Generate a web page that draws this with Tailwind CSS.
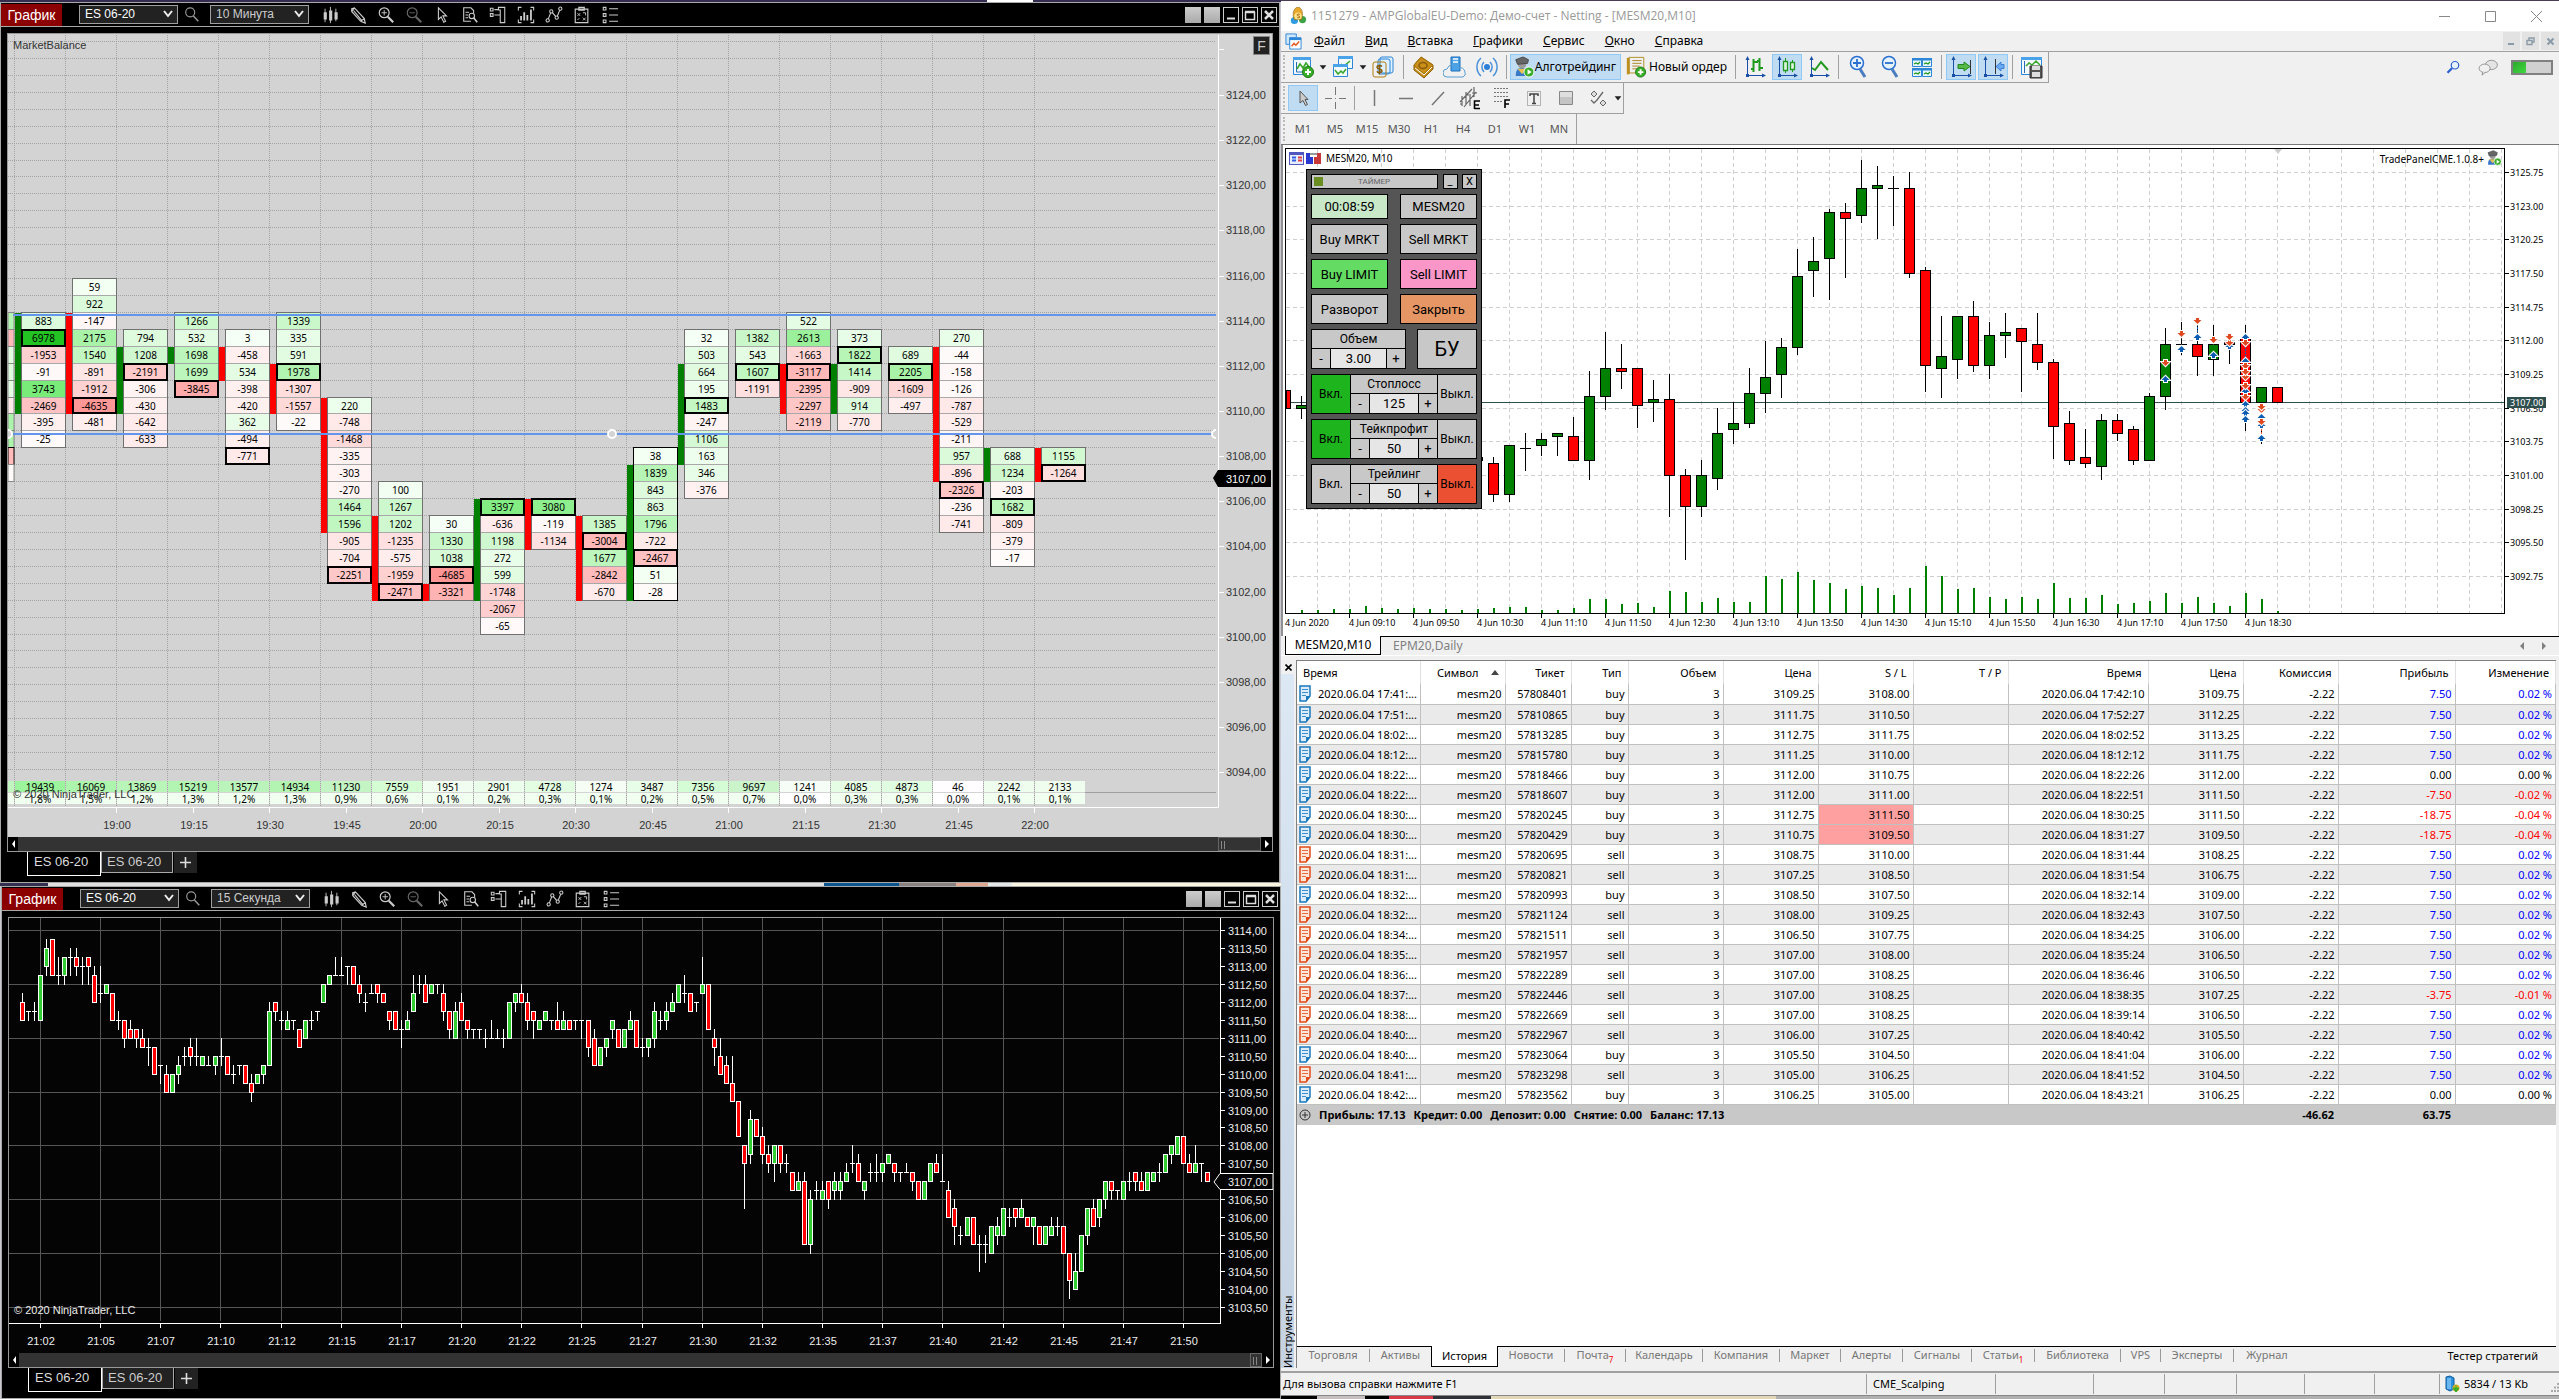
<!DOCTYPE html>
<html lang="ru">
<head>
<meta charset="utf-8">
<title>Trading desktop</title>
<script src="https://cdn.jsdelivr.net/npm/@tailwindcss/browser@4"></script>
</head>
<body class="h-screen overflow-hidden bg-[#3a3350]">
<svg class="hidden" aria-hidden="true">
  <defs>
    <linearGradient id="gold" x1="0" y1="0" x2="1" y2="1"><stop offset="0" stop-color="#fff0a0"/><stop offset="1" stop-color="#d9a520"/></linearGradient>
    <linearGradient id="sky" x1="0" y1="0" x2="0" y2="1"><stop offset="0" stop-color="#eaf6ff"/><stop offset="1" stop-color="#8fc6f0"/></linearGradient>
    <linearGradient id="steel" x1="0" y1="0" x2="1" y2="1"><stop offset="0" stop-color="#e8e8e8"/><stop offset="1" stop-color="#888"/></linearGradient>

    <symbol id="n-candles" viewBox="0 0 20 20"><path d="M4.500 3v15M10.500 1v18M16.500 3v14" stroke="#ccc"/><path d="M3 7h3.500v8H3zM9 5h3.500v11H9zM15 7h3.500v8H15z" fill="#ccc"/></symbol>
    <symbol id="n-pencil" viewBox="0 0 20 20"><path d="M3 3l3-1 11 12 1 5-5-2L3 6zM3 6l3-4M5 5l9 11M13 17l4-3" fill="none" stroke="#ccc" stroke-width="1.300"/></symbol>
    <symbol id="n-zin" viewBox="0 0 20 20"><circle cx="8" cy="7.500" r="5.500" fill="none" stroke="#ccc" stroke-width="1.300"/><path d="M5 7.500h6M8 4.500v6" stroke="#ccc"/><path d="M12 12l6 6" stroke="#ccc" stroke-width="2.500"/></symbol>
    <symbol id="n-zout" viewBox="0 0 20 20"><circle cx="8" cy="7.500" r="5.500" fill="none" stroke="#666" stroke-width="1.300"/><path d="M5 7.500h6" stroke="#666"/><path d="M12 12l6 6" stroke="#666" stroke-width="2.500"/></symbol>
    <symbol id="n-find" viewBox="0 0 20 20"><circle cx="8" cy="7" r="5" fill="none" stroke="#999" stroke-width="1.300"/><path d="M11.500 11l5.500 6" stroke="#999" stroke-width="1.600"/></symbol>
    <symbol id="n-cursor" viewBox="0 0 20 20"><path d="M6 2v13l3-3 3 6 2-1-3-6h4z" fill="none" stroke="#ccc" stroke-width="1.200"/></symbol>
    <symbol id="n-doc" viewBox="0 0 20 20"><path d="M14 8V5l-3-3H3v15h8M5 7h4M5 10h3M5 13h3" fill="none" stroke="#ccc" stroke-width="1.200"/><circle cx="12" cy="11" r="3" fill="none" stroke="#ccc" stroke-width="1.200"/><path d="M14 13l4 5" stroke="#ccc" stroke-width="1.800"/></symbol>
    <symbol id="n-panel" viewBox="0 0 20 20"><path d="M1.500 2.500h3v3h-3zM1.500 8.500h3v3h-3zM6 4h4M6 10h6M10.500 1.500h7v17h-5v-14h-2z" fill="none" stroke="#ccc" stroke-width="1.200"/></symbol>
    <symbol id="n-bars" viewBox="0 0 20 20"><path d="M1.500 5V1.500H5M15 1.500h3.500V5M1.500 15v3.500H5M15 18.500h3.500V15" fill="none" stroke="#ccc" stroke-width="1.200"/><path d="M4.500 16v-5M8 16V7M11.500 16v-6M15.500 16V4" stroke="#ccc" stroke-width="2"/></symbol>
    <symbol id="n-zig" viewBox="0 0 20 20"><path d="M3 16l4-10 6 7 4-10" fill="none" stroke="#ccc" stroke-width="1.200"/><g fill="#000" stroke="#ccc" stroke-width="1.200"><circle cx="3" cy="16" r="1.800"/><circle cx="7" cy="6" r="1.800"/><circle cx="13" cy="13" r="1.800"/><circle cx="17" cy="3" r="1.800"/></g></symbol>
    <symbol id="n-clip" viewBox="0 0 20 20"><path d="M2.500 3.500h14v15h-14zM6.500 1.500h6v3h-6z" fill="none" stroke="#ccc" stroke-width="1.300"/><path d="M5 8l3 3M8 8l-3 3M11 7.500h3v3M5 15.500l2-2M11 13l3 3M14 13l-3 3" stroke="#ccc" fill="none"/></symbol>
    <symbol id="n-list" viewBox="0 0 20 20"><path d="M2.500 1.500h3v3h-3zM2.500 8.500h3v3h-3zM2.500 15.500h3v3h-3zM9 3h10M9 10h10M9 17h10" fill="none" stroke="#ccc" stroke-width="1.200"/></symbol>

    <symbol id="m-logo" viewBox="0 0 20 20"><circle cx="6" cy="15" r="4" fill="#2f9be0"/><circle cx="15" cy="14" r="4" fill="#3aa545"/><path d="M10 0c5 1 6 8 4 14H6C3 8 5 1 10 0z" fill="#e8a82c" stroke="#8a6a20" stroke-width=".7"/><circle cx="10" cy="10" r="4" fill="#ffe38a"/><path d="M12 8.500c-1-1-3-1-3 .3 0 1.400 3 .8 3 2.300 0 1.300-2.300 1.300-3.200.3" fill="none" stroke="#a05a00"/></symbol>
    <symbol id="m-win" viewBox="0 0 18 18"><path d="M1 1h11v4H5v7H1z" fill="#cfe6fb" stroke="#2d86d6"/><path d="M5 5h12v12H5z" fill="#fff" stroke="#2d86d6"/><path d="M5 5h12v2.500H5z" fill="#2d86d6"/><path d="M7 14l2.500-3 2 2 3.500-4" fill="none" stroke="#e2571c" stroke-width="1.500"/></symbol>
    <symbol id="m-newchart" viewBox="0 0 24 24"><path d="M2.500 2.500h17v17h-17z" fill="#f2f9ff" stroke="#2d86d6"/><path d="M2 2h18v3H2z" fill="#4aa3e8"/><path d="M5.500 7v10h12" fill="none" stroke="#2a6cb0"/><path d="M6 14l3-5 3 4 3-5 3 4" fill="none" stroke="#3aa82a" stroke-width="1.600"/><circle cx="17" cy="17" r="5.500" fill="#38ad28" stroke="#1c7a12"/><path d="M14 17h6M17 14v6" stroke="#fff" stroke-width="2"/></symbol>
    <symbol id="m-charts" viewBox="0 0 24 24"><path d="M7.500 1.500h14v12h-14z" fill="#f2f9ff" stroke="#2d86d6"/><path d="M7 1h15v3H7z" fill="#4aa3e8"/><path d="M10 9l3 2 6-5" fill="none" stroke="#3aa82a" stroke-width="1.500"/><path d="M2.500 9.500h14v12h-14z" fill="#f2f9ff" stroke="#2d86d6"/><path d="M2 9h15v3H2z" fill="#4aa3e8"/><path d="M4 15l3 4 3-3 2 2 3-4" fill="none" stroke="#3aa82a" stroke-width="1.500"/></symbol>
    <symbol id="m-money" viewBox="0 0 24 24"><rect x="9" y="2" width="13" height="16" rx="2" fill="#dff0ff" stroke="#2d86d6"/><rect x="7" y="4" width="12" height="15" rx="2" fill="url(#sky)" stroke="#2d86d6"/><rect x="2" y="7" width="13" height="15" rx="2" fill="url(#gold)" stroke="#b07c10"/><path d="M11 11.500c-1-1.500-5-1.500-5 .8 0 2.200 5 1.200 5 3.500 0 2.200-4 2.200-5.200.5M8.500 9.500v10" fill="none" stroke="#8a5a00" stroke-width="1.400"/></symbol>
    <symbol id="m-book" viewBox="0 0 24 24"><path d="M3 10l7-8 12 8v4l-9 9-10-8z" fill="#c98f18" stroke="#8a5c08"/><path d="M3 10l7-8 12 8-9 9z" fill="url(#gold)" stroke="#a8760c"/><path d="M4 13l9 7 8-8" fill="none" stroke="#fff"/><ellipse cx="12" cy="10.500" rx="4" ry="3" fill="none" stroke="#8a5c08" stroke-width="1.500"/></symbol>
    <symbol id="m-cloud" viewBox="0 0 24 24"><path d="M8 2h9v14H8z" fill="#4aa3e8" stroke="#1c6cb8"/><path d="M10 4h5M10 7h5" stroke="#fff" stroke-width="1.500"/><path d="M4 22a4 4 0 010-8 6 6 0 0111-1 5 5 0 017 4 4 4 0 01-2 5z" fill="url(#sky)" stroke="#5a9fd4"/></symbol>
    <symbol id="m-signal" viewBox="0 0 24 24"><g fill="none" stroke="#4a8fd8" stroke-width="1.500"><path d="M6 3a12 12 0 000 18M18 3a12 12 0 010 18"/><path d="M9 7a7 7 0 000 10M15 7a7 7 0 010 10"/></g><circle cx="12" cy="12" r="3" fill="#2d7fd8"/></symbol>
    <symbol id="m-algo" viewBox="0 0 24 24"><path d="M3 22c0-8 3-9 7-9s6 3 7 9z" fill="#3a78c8"/><path d="M5 14l5 6 4-6z" fill="#e8c050"/><circle cx="10" cy="9" r="4.500" fill="#9a9a9a"/><path d="M3 4l8-3 6 3-1 4-11 1z" fill="#666" stroke="#444"/><circle cx="17.500" cy="17.500" r="5.500" fill="#38ad28" stroke="#fff"/><path d="M16 14.500l4.500 3-4.500 3z" fill="#fff"/></symbol>
    <symbol id="m-order" viewBox="0 0 24 24"><path d="M2 2h3v18H2z" fill="#c09020"/><path d="M4.500 1.500h16v17h-16z" fill="url(#gold)" stroke="#b08a20"/><path d="M8 5h10M8 8h10M8 11h8M8 14h6" stroke="#a88018"/><circle cx="17" cy="17.500" r="5.500" fill="#38ad28" stroke="#1c7a12"/><path d="M14 17.500h6M17 14.500v6" stroke="#fff" stroke-width="2"/></symbol>
    <symbol id="m-axis" viewBox="0 0 24 24"><path d="M4.500 3v17M3 20.500h18" stroke="#1a4fa8" fill="none"/><path d="M2.500 5l2-4 2 4zM19 18.500l4 2-4 2zM3 19h3v3H3z" fill="#1a4fa8"/></symbol>
    <symbol id="m-bars" viewBox="0 0 24 24"><use href="#m-axis"/><path d="M10.500 4v13M8 14h2M11 7h4M16.500 3v13M14 6h2M17 13h3" stroke="#1f9a1f" stroke-width="2" fill="none"/></symbol>
    <symbol id="m-candles" viewBox="0 0 24 24"><use href="#m-axis"/><path d="M10.500 3v15M17.500 5v12" stroke="#1f9a1f"/><path d="M8.500 6.500h4v9h-4zM15.500 7.500h4v7h-4z" fill="#dff5df" stroke="#1f9a1f" stroke-width="1.300"/></symbol>
    <symbol id="m-line" viewBox="0 0 24 24"><use href="#m-axis"/><path d="M5 13l3 2 6-8 7 8" fill="none" stroke="#1f9a1f" stroke-width="2"/></symbol>
    <symbol id="m-zin" viewBox="0 0 24 24"><circle cx="11" cy="8" r="6.500" fill="#e6f3ff" stroke="#2a6fd0" stroke-width="1.500"/><path d="M7 8h8M11 4v8" stroke="#2a6fd0" stroke-width="1.800"/><path d="M14 14l5 8" stroke="#4a7cc0" stroke-width="3"/></symbol>
    <symbol id="m-zout" viewBox="0 0 24 24"><circle cx="11" cy="8" r="6.500" fill="#e6f3ff" stroke="#2a6fd0" stroke-width="1.500"/><path d="M7 8h8" stroke="#2a6fd0" stroke-width="1.800"/><path d="M14 14l5 8" stroke="#4a7cc0" stroke-width="3"/></symbol>
    <symbol id="m-tile" viewBox="0 0 24 24"><g fill="#e6f6ff" stroke="#2d86d6"><path d="M2.500 3.500h9v8h-9zM12.500 3.500h9v8h-9zM2.500 13.500h9v8h-9zM12.500 13.500h9v8h-9z"/></g><path d="M2 3h10v2.500H2zM12 3h10v2.500H12zM2 13h10v2.500H2zM12 13h10v2.500H12z" fill="#2d86d6"/><path d="M4 9l2-1 2 1 2-2M14 9l2-1 2 1 2-2M4 19l2-1 2 1 2-2M14 19l2-1 2 1 2-2" fill="none" stroke="#1f9a1f" stroke-width="1.200"/></symbol>
    <symbol id="m-scroll" viewBox="0 0 24 24"><use href="#m-axis"/><path d="M21.500 5v14" stroke="#333"/><path d="M9 9.500h6V7l6 4.500-6 4.500v-2.500H9z" fill="#58b848" stroke="#1f8a1f"/></symbol>
    <symbol id="m-shift" viewBox="0 0 24 24"><use href="#m-axis"/><path d="M14.500 4v15" stroke="#333"/><path d="M23 9.500h-3V7l-5 4.500 5 4.500v-2.500h3z" fill="#6aaaf0" stroke="#2a6fd0" stroke-width=".8"/></symbol>
    <symbol id="m-tpl" viewBox="0 0 24 24"><path d="M1.500 2.500h20v17h-20z" fill="#f2f9ff" stroke="#2d86d6"/><path d="M1 2h21v3H1z" fill="#4aa3e8"/><path d="M4.500 6v12" stroke="#2a6cb0"/><path d="M6 11l3-3 3 2 4-4 4 4" fill="none" stroke="#3aa82a" stroke-width="1.500"/><path d="M10 11h12v12H10z" fill="#555" stroke="#333"/><path d="M12 11h8v4h-8zM12 17h8v5h-8z" fill="#ddd"/></symbol>
    <symbol id="m-cross" viewBox="0 0 24 24"><path d="M12.500 1v8M12.500 16v7M2 12.500h7M16 12.500h7M12 12.500h1" stroke="#777"/></symbol>
    <symbol id="m-cur" viewBox="0 0 24 24"><path d="M9 5v12l3-2.500 2.500 5 2-1-2.500-5h3z" fill="#ccc" stroke="#555"/></symbol>
    <symbol id="m-v" viewBox="0 0 24 24"><path d="M12.500 4v16" stroke="#777" stroke-width="1.500"/></symbol>
    <symbol id="m-h" viewBox="0 0 24 24"><path d="M5 12.500h14" stroke="#777" stroke-width="1.500"/></symbol>
    <symbol id="m-d" viewBox="0 0 24 24"><path d="M6 19L18 6" stroke="#777" stroke-width="1.500"/></symbol>
    <symbol id="m-chan" viewBox="0 0 24 24"><path d="M2 16L14 3M6 21L18 6M4 10v10M8 6v12M12 8v12M16 1v10M2 18h2M8 9h3M14 7h5" stroke="#666" fill="none" stroke-width="1.200"/><path d="M16.500 23v-8H22M16.500 19H21M16.500 22.500H22" stroke="#000" stroke-width="1.600" fill="none"/></symbol>
    <symbol id="m-fib" viewBox="0 0 24 24"><path d="M4 2.500h14M4 6.500h14M4 10.500h14M4 15.500h8" stroke="#777" stroke-dasharray="2 1"/><path d="M15 22v-8h5M15 18h4" stroke="#000" stroke-width="1.600" fill="none"/></symbol>
    <symbol id="m-text" viewBox="0 0 24 24"><path d="M5.500 5.500h13v14h-13z" fill="none" stroke="#777" stroke-dasharray="1 1"/><path d="M8 10V8h8v2M12 8v9M10 17.500h4" stroke="#444" stroke-width="1.500" fill="none"/></symbol>
    <symbol id="m-rect" viewBox="0 0 24 24"><path d="M5.500 5.500h13v13h-13z" fill="#c4c4c4" stroke="#888"/><path d="M6 6h12v5H6z" fill="#dedede"/></symbol>
    <symbol id="m-obj" viewBox="0 0 24 24"><path d="M8 5l3 3-3 3-3-3zM17 14l3 3-3 3-3-3z" fill="#ddd" stroke="#666"/><path d="M17 6l-6 8-3 3-3-3" fill="none" stroke="#666" stroke-width="1.300"/></symbol>
    <symbol id="m-tiny" viewBox="0 0 8 24"><path d="M0 10h8l-4 5z" fill="#222"/></symbol>
    <symbol id="m-search" viewBox="0 0 20 20"><circle cx="12" cy="7" r="5" fill="#e6f3ff" stroke="#2a5fd0" stroke-width="1.600"/><path d="M8 11l-6 6" stroke="#2a5fd0" stroke-width="3"/></symbol>
    <symbol id="m-chat" viewBox="0 0 24 20"><ellipse cx="16" cy="7" rx="7" ry="5.500" fill="#e4e4e4" stroke="#888"/><ellipse cx="8" cy="11" rx="6.500" ry="5" fill="#f0f0f0" stroke="#888"/><path d="M6 15l-1 4 4-3.500" fill="#eee" stroke="#888"/></symbol>
    <symbol id="m-docb" viewBox="0 0 12 17"><path d="M1 1h10v10l-4 5H1z" fill="#dcecfb" stroke="#1878bc" stroke-width="1.500"/><path d="M3 4.500h6M3 7.500h6M3 10.500h4" stroke="#3a8fd0"/><path d="M11 11l-4 5v-5z" fill="#1878bc"/></symbol>
    <symbol id="m-docs" viewBox="0 0 12 17"><path d="M1 1h10v10l-4 5H1z" fill="#fde6da" stroke="#e04a18" stroke-width="1.500"/><path d="M3 4.500h6M3 7.500h6M3 10.500h4" stroke="#e86a40"/><path d="M11 11l-4 5v-5z" fill="#e04a18"/></symbol>
    <symbol id="m-net" viewBox="0 0 18 18"><path d="M2 2l4-1 4 2v11l-4 2-4-2z" fill="#2a90e0" stroke="#0f5a9c"/><path d="M4 3v11M6 3v11" stroke="#a8dcff"/><circle cx="12" cy="13" r="3.500" fill="#e0b020"/><path d="M12 10v6M9 13l3 4 3-4z" fill="#38ad28" stroke="#38ad28"/></symbol>
  </defs>
</svg>

<div class="grid h-full grid-cols-[1281fr_1278fr]">

  <!-- NinjaTrader column -->
  <div class="grid min-h-0 min-w-0 grid-rows-[2px_881fr_3px_513fr] bg-[#c8c8d0]">
    <div class="flex bg-[#352c52]"><span class="ml-[987px] w-[46px] bg-white"></span></div>
    <section id="win1" class="mr-px flex min-h-0 flex-col border border-[#a8a8a8] bg-black font-['Liberation_Sans',sans-serif]"></section>
    <div class="flex">
      <span class="w-12 bg-[#332f50]"></span><span class="w-[776px] bg-[#e0e0e0]"></span><span class="w-[75px] bg-[#0a5590]"></span><span class="w-[57px] bg-[#8a8280]"></span><span class="w-8 bg-[#e0a890]"></span><span class="w-6 bg-[#e4e8e8]"></span><span class="flex-1 bg-[#f8f4e0]"></span>
    </div>
    <section id="win2" class="ml-px flex min-h-0 flex-col border border-[#a8a8a8] bg-black font-['Liberation_Sans',sans-serif]"></section>
  </div>

  <!-- MetaTrader column -->
  <div class="flex min-h-0 min-w-0 flex-col border-t border-[#4a4055] bg-[#f0f0f0] font-['Noto_Sans',sans-serif] text-[11px] text-black">
    <header class="flex h-[30px] shrink-0 items-center bg-white pl-2 text-xs text-[#999]">
      <svg class="size-[18px]"><use href="#m-logo"/></svg>
      <h1 class="ml-1 font-['Open_Sans',sans-serif] text-xs">1151279 - AMPGlobalEU-Demo: Демо-счет - Netting - [MESM20,M10]</h1>
      <div class="ml-auto flex">
        <button aria-label="Свернуть" class="flex h-7 w-[45px] items-center justify-center"><svg width="11" height="11"><path d="M0 5.500h11" stroke="#888"/></svg></button>
        <button aria-label="Развернуть" class="flex h-7 w-[46px] items-center justify-center"><svg width="11" height="11"><path d="M.5.500h10v10H.500z" fill="none" stroke="#888"/></svg></button>
        <button aria-label="Закрыть" class="flex h-7 w-[46px] items-center justify-center"><svg width="11" height="11"><path d="M0 0l11 11M11 0L0 11" stroke="#888"/></svg></button>
      </div>
    </header>
    <nav class="flex h-[21px] shrink-0 items-center gap-5 border-b border-[#a0a0a0] pl-1 text-xs">
      <svg class="-mr-2 size-[17px]"><use href="#m-win"/></svg>
      <a href="#"><u>Ф</u>айл</a><a href="#"><u>В</u>ид</a><a href="#"><u>В</u>ставка</a><a href="#"><u>Г</u>рафики</a><a href="#"><u>С</u>ервис</a><a href="#"><u>О</u>кно</a><a href="#"><u>С</u>правка</a>
      <div class="ml-auto flex gap-0.5">
        <button aria-label="Свернуть график" class="flex h-[18px] w-[17px] items-center justify-center bg-[#e2e2e2]"><svg width="9" height="9"><path d="M1 7h6" stroke="#8a9aa8" stroke-width="2"/></svg></button>
        <button aria-label="Восстановить график" class="flex h-[18px] w-[17px] items-center justify-center bg-[#e2e2e2]"><svg width="9" height="9"><path d="M3 3V1h5v4H6M1 3.500h5v4H1z" fill="none" stroke="#8a9aa8" stroke-width="1.400"/></svg></button>
        <button aria-label="Закрыть график" class="flex h-[18px] w-[18px] items-center justify-center bg-[#e2e2e2]"><svg width="9" height="9"><path d="M1.500 1.500l6 6M7.500 1.500l-6 6" stroke="#8a9aa8" stroke-width="2"/></svg></button>
      </div>
    </nav>

    <div class="flex h-[31px] shrink-0">
      <div class="flex items-center border-r border-b border-[#a0a0a0]" id="tb1"></div>
      <div class="ml-auto flex items-center gap-4 pr-1.5">
        <button aria-label="Поиск"><svg class="size-[15px]"><use href="#m-search"/></svg></button>
        <button aria-label="Чат"><svg class="h-[17px] w-[22px]"><use href="#m-chat"/></svg></button>
        <span class="-ml-1 flex h-[15px] w-[42px] border-2 border-[#808080] bg-[#d0d0d0]"><span class="w-[13px] bg-linear-to-br from-[#2ca82c] to-[#40d840]"></span></span>
      </div>
    </div>
    <div class="flex h-[31px] shrink-0"><div class="flex items-center border-r border-b border-[#a0a0a0]" id="tb2"></div></div>
    <div class="flex h-[31px] shrink-0 border-b border-[#787878]"><div class="flex items-center border-r border-[#a0a0a0] text-[#555]" id="tb3"></div></div>

    <!-- price chart with the trading panel over it -->
    <main class="relative h-[491px] shrink-0 border-r border-l-2 border-[#909090] border-r-[#e0e0e0] bg-white">
      <svg id="mt" class="block h-full w-full"></svg>
      <aside class="absolute top-6 left-[23px] flex w-[176px] flex-col gap-[5px] border border-black bg-[#555] p-1 font-['Roboto',sans-serif] text-[13px] leading-none">
        <div class="flex h-[15px] items-stretch justify-between">
          <div class="flex w-[127px] items-center border border-black bg-[#c8c8c8] pl-0.5 text-[8px] text-[#666]"><span class="size-[9px] bg-[#6b8e23]"></span><span class="flex-1 pr-3 text-center">ТАЙМЕР</span></div>
          <button class="w-[15px] border border-black bg-[#c8c8c8] text-[11px]">_</button>
          <button class="w-[15px] border border-black bg-[#c8c8c8] text-[11px]">X</button>
        </div>
        <div class="grid grid-cols-2 gap-x-3 gap-y-[5px]">
          <div class="flex h-[25px] items-center justify-center border border-black bg-[#c8e8c8]">00:08:59</div>
          <button class="h-[25px] border border-black bg-[#c8c8c8]">MESM20</button>
          <button class="h-[30px] border border-black bg-[#c8c8c8]">Buy MRKT</button>
          <button class="h-[30px] border border-black bg-[#c8c8c8]">Sell MRKT</button>
          <button class="h-[30px] border border-black bg-[#64dc64]">Buy LIMIT</button>
          <button class="h-[30px] border border-black bg-[#fa96c8]">Sell LIMIT</button>
          <button class="h-[30px] border border-black bg-[#c8c8c8]">Разворот</button>
          <button class="h-[30px] border border-black bg-[#e69664]">Закрыть</button>
        </div>
        <div class="flex h-10 justify-between">
          <div class="flex w-[95px] flex-col border border-black bg-[#c8c8c8]">
            <label for="vol" class="flex h-[18px] items-center justify-center text-xs">Объем</label>
            <div class="flex min-h-0 flex-1 border-t border-black"><button class="w-[18px] shrink-0">-</button><input id="vol" value="3.00" class="min-w-0 flex-1 border-x border-black bg-[#e6e6e6] text-center"><button class="w-[18px] shrink-0">+</button></div>
          </div>
          <button class="w-[60px] border border-black bg-[#c8c8c8] text-xl">БУ</button>
        </div>
        <div id="stops" class="flex flex-col gap-[5px] text-xs"></div>
      </aside>
    </main>

    <div class="flex h-5 shrink-0 items-start border-b border-white bg-[#f0f0f0] text-xs">
      <a href="#" class="ml-1 flex h-[19px] w-24 items-center justify-center border border-t-0 border-black bg-white">MESM20,M10</a>
      <a href="#" class="flex h-[19px] flex-1 items-center border-t border-black pl-3 text-[#808080]">EPM20,Daily</a>
      <div class="flex h-[19px] items-center gap-4 border-t border-black pr-3">
        <button aria-label="Влево"><svg width="6" height="8"><path d="M5 0v8L1 4z" fill="#808080"/></svg></button>
        <button aria-label="Вправо"><svg width="6" height="8"><path d="M1 0v8l4-4z" fill="#808080"/></svg></button>
      </div>
    </div>

    <!-- toolbox -->
    <section class="flex min-h-0 flex-1 pt-1 pr-[3px] pb-[3px]">
      <div class="flex w-[15px] flex-col">
        <button aria-label="Закрыть панель" class="flex h-[14px] items-center justify-center"><svg width="7" height="7"><path d="M.5.500l6 6M6.500.500l-6 6" stroke="#000" stroke-width="1.600"/></svg></button>
        <div class="mr-0.5 flex flex-1 rotate-180 items-center bg-linear-to-b from-[#c4d2e2] to-[#dce8f4] [writing-mode:vertical-rl]"><span class="leading-none">Инструменты</span></div>
      </div>
      <div class="flex min-w-0 flex-1 flex-col border-t border-l border-[#808080] bg-white">
        <table class="w-full table-fixed border-collapse text-right leading-none">
          <colgroup><col class="w-[123px]"><col class="w-[85px]"><col class="w-[66px]"><col class="w-[57px]"><col class="w-[95px]"><col class="w-[95px]"><col class="w-[95px]"><col class="w-[95px]"><col class="w-[140px]"><col class="w-[95px]"><col class="w-[95px]"><col class="w-[117px]"><col></colgroup>
          <thead><tr id="heads" class="h-[23px]"></tr></thead>
          <tbody id="rows"></tbody>
          <tfoot class="bg-[#c8c8c8] font-bold">
            <tr class="h-[21px]"><td colspan="10"><div class="flex items-center gap-2 pl-0.5"><svg width="12" height="12"><circle cx="6" cy="6" r="5" fill="none" stroke="#333"/><path d="M3 6h6M6 3v6" stroke="#333"/></svg><span>Прибыль: 17.13</span><span>Кредит: 0.00</span><span>Депозит: 0.00</span><span>Снятие: 0.00</span><span>Баланс: 17.13</span></div></td><td class="pr-1">-46.62</td><td class="pr-1">63.75</td><td></td></tr>
          </tfoot>
        </table>
        <div class="flex-1 border-b border-black"></div>
        <div id="tabs" class="flex h-[21px] items-start bg-[#f0f0f0] text-[#777]"></div>
      </div>
    </section>

    <footer class="flex h-6 shrink-0 items-center border-t-2 border-[#a0a0a0]">
      <span class="w-[585px] pl-0.5">Для вызова справки нажмите F1</span>
      <span class="flex h-5 w-[129px] items-center border-l border-[#a0a0a0] pl-1.5">CME_Scalping</span>
      <span class="h-5 w-[98px] border-l border-[#a0a0a0]"></span><span class="h-5 w-[71px] border-l border-[#a0a0a0]"></span><span class="h-5 w-[72px] border-l border-[#a0a0a0]"></span><span class="h-5 w-[68px] border-l border-[#a0a0a0]"></span><span class="h-5 w-[70px] border-l border-[#a0a0a0]"></span><span class="h-5 w-[65px] border-l border-[#a0a0a0]"></span>
      <span class="flex h-5 flex-1 items-center gap-0.5 border-l border-[#a0a0a0] pl-1"><svg class="size-[18px]"><use href="#m-net"/></svg>5834 / 13 Kb</span>
      <svg width="10" height="10" class="mt-2"><path d="M8 1h2M5 4.500h2M8 4.500h2M2 8h2M5 8h2M8 8h2" stroke="#aaa" stroke-width="2"/></svg>
    </footer>
    <div class="flex h-1 shrink-0 border-t border-[#888]"><span class="w-9 bg-black"></span><span class="w-12 bg-[#c8c0c0]"></span><span class="w-6 bg-black"></span><span class="w-[44px] bg-[#d83848]"></span><span class="w-[58px] bg-[#303038]"></span><span class="w-[285px] bg-[#e0d8b8]"></span><span class="flex-1 bg-[#b0b0b0]"></span></div>
  </div>
</div>

<script>
const $ = id => document.getElementById(id);

/* ---------- NinjaTrader windows ---------- */
const nIcons = [['n-candles','Стиль графика'],['n-pencil','Рисование'],['n-zin','Увеличить'],['n-zout','Уменьшить'],['n-cursor','Курсор'],['n-doc','Ряды данных'],['n-panel','Панель'],['n-bars','Данные'],['n-zig','Индикаторы'],['n-clip','Стратегии'],['n-list','Свойства']];
function ninjaWindow(id, period, chartId, thumb, extra) {
  const sel = (v, cls, label) => `<div class="relative h-[19px] w-[99px]"><select aria-label="${label}" class="block h-full w-full appearance-none border border-[#a0a0a0] bg-[#222] pb-0.5 pl-[5px] text-xs ${cls}"><option>${v}</option></select><svg class="pointer-events-none absolute top-[5px] right-[5px]" width="10" height="8"><path d="M1 1l4 5 4-5" fill="none" stroke="#eee" stroke-width="2"/></svg></div>`;
  $(id).innerHTML = `
  <header class="flex h-6 shrink-0 items-center border-b border-[#a8a8a8]">
    <h2 class="flex h-[22px] w-[61px] items-center justify-center bg-[#8b0000] text-sm text-white">График</h2>
    <div class="w-[17px]"></div>
    ${sel('ES 06-20', 'text-white', 'Инструмент')}
    <button aria-label="Найти" class="ml-1 flex w-5 justify-center"><svg class="size-[18px]"><use href="#n-find"/></svg></button>
    <div class="w-2"></div>
    ${sel(period, 'text-[#ccc]', 'Период')}
    <div class="ml-[7px] flex">${nIcons.map(i => `<button aria-label="${i[1]}" class="flex w-7 justify-center"><svg class="size-[18px]"><use href="#${i[0]}"/></svg></button>`).join('')}</div>
    <div class="mr-0.5 ml-auto flex gap-[3px]">
      <span class="size-4 bg-linear-to-b from-[#ccc] to-[#aaa]"></span><span class="size-4 bg-linear-to-b from-[#ccc] to-[#aaa]"></span>
      <button aria-label="Свернуть" class="size-4 border border-[#ccc]"><svg width="14" height="14"><path d="M3 10.500h8" stroke="#ddd" stroke-width="2"/></svg></button>
      <button aria-label="Развернуть" class="size-4 border border-[#ccc]"><svg width="14" height="14"><path d="M2.500 4.500h9v7h-9zM2 3.500h10" fill="none" stroke="#ddd" stroke-width="1.500"/></svg></button>
      <button aria-label="Закрыть" class="size-4 border border-[#ccc]"><svg width="14" height="14"><path d="M3 3l8 8M11 3l-8 8" stroke="#ddd" stroke-width="2.500"/></svg></button>
    </div>
  </header>
  <div class="relative mx-1.5 mt-1.5 flex min-h-0 flex-1 flex-col border border-[#989898]">
    <svg id="${chartId}" class="block min-h-0 w-full flex-1"></svg>${extra}
    <div class="flex h-[14px] shrink-0 bg-[#333]">
      <button aria-label="Назад" class="w-[10px] bg-black"><svg width="10" height="14"><path d="M7 3v8L4 7z" fill="#fff"/></svg></button>
      <span class="ml-auto ${thumb} border border-[#666] pt-[3px] pl-0.5"><svg width="5" height="8"><path d="M.5 0v8M3.500 0v8" stroke="#888"/></svg></span>
      <button aria-label="Вперёд" class="w-[11px] bg-black"><svg width="11" height="14"><path d="M4 3v8l4-4z" fill="#fff"/></svg></button>
    </div>
  </div>
  <div class="flex h-[30px] shrink-0 items-start pl-[26px] text-[13px] leading-[19px] text-[#ccc]">
    <a href="#" class="h-6 w-[74px] border border-t-0 border-white bg-black pl-1.5 text-[#ddd]">ES 06-20</a>
    <a href="#" class="h-[21px] w-[72px] border border-t-0 border-[#aaa] bg-[#222] pl-[5px]">ES 06-20</a>
    <button aria-label="Добавить вкладку" class="ml-px flex h-[21px] w-[23px] items-center justify-center bg-[#222]"><svg width="11" height="11"><path d="M0 5.500h11M5.500 0v11" stroke="#ddd" stroke-width="1.600"/></svg></button>
  </div>`;
}
ninjaWindow('win1', '10 Минута', 'fp', 'w-[43px]', '<button class="absolute top-0.5 right-0.5 h-[19px] w-[17px] border border-[#888] bg-[#222] text-sm leading-none text-[#ccc]">F</button>');
ninjaWindow('win2', '15 Секунда', 'sec', 'w-[12px]', '');

const line = (x1, y1, x2, y2, a = '') => `<path d="M${x1} ${y1}L${x2} ${y2}" ${a}/>`;
const rect = (x, y, w, h, a) => `<rect x="${x}" y="${y}" width="${w}" height="${h}" ${a}/>`;
const text = (x, y, s, a = '') => `<text x="${x}" y="${y}" ${a}>${s}</text>`;
const lerp = (pts, v) => { for (let i = 1; i < pts.length; i++) if (v <= pts[i][0]) { const [a, b] = pts[i - 1], [c, d] = pts[i]; return Math.round(b + (d - b) * (v - a) / (c - a)); } return pts[pts.length - 1][1]; };

/* Footprint chart: first row, bar colour, bar rows, deltas; * marks the point of control */
const cols = [
 [16,'g',16,22,'883 6978* -1953 -91 3743 -2469 -395 -25'],
 [14,'r',16,22,'59 922 -147 2175 1540 -891 -1912 -4635* -481'],
 [17,'g',18,22,'794 1208 -2191* -306 -430 -642 -633'],
 [16,'g',18,19,'1266 532 1698 1699 -3845*'],
 [17,'r',18,20,'3 -458 534 -398 -420 362 -494 -771*'],
 [16,'r',19,22,'1339 335 591 1978* -1307 -1557 -22'],
 [21,'r',21,29,'220 -748 -1468 -335 -303 -270 1464 1596 -905 -704 -2251*'],
 [26,'r',28,33,'100 1267 1202 -1235 -575 -1959 -2471*'],
 [28,'r',32,33,'30 1330 1038 -4685* -3321'],
 [27,'g',27,33,'3397* -636 1198 272 599 -1748 -2067 -65'],
 [27,'r',27,30,'3080* -119 -1134'],
 [28,'r',28,33,'1385 -3004* 1677 -2842 -670'],
 [24,'g',25,33,'38 1839 843 863 1796 -722 -2467* 51 -28'],
 [17,'g',19,25,'32 503 664 195 1483* -247 1106 163 346 -376'],
 [17,'',0,0,'1382 543 1607* -1191'],
 [16,'r',19,22,'522 2613 -1663 -3117* -2395 -2297 -2119'],
 [17,'g',19,22,'373 1822* 1414 -909 914 -770'],
 [18,'',0,0,'689 2205* -1609 -497'],
 [17,'r',18,26,'270 -44 -158 -126 -787 -529 -211 957 -896 -2326* -236 -741'],
 [24,'g',24,26,'688 1234 -203 1682* -809 -379 -17'],
 [24,'r',24,26,'1155 -1264*']];
const vols = [19439,16069,13869,15219,13577,14934,11230,7559,1951,2901,4728,1274,3487,7356,9697,1241,4085,4873,46,2242,2133];
const pcts = '1,8 1,5 1,2 1,3 1,2 1,3 0,9 0,6 0,1 0,2 0,3 0,1 0,2 0,5 0,7 0,0 0,3 0,3 0,0 0,1 0,1'.split(' ');
const tone = v => {
  if (v >= 0) { const c = lerp([[0,246],[300,232],[900,220],[1500,196],[2200,168],[3700,122],[7000,34]], v); return `rgb(${c},${lerp([[0,255],[2200,243],[3700,236],[7000,195]], v)},${c})`; }
  const c = lerp([[0,251],[400,240],[900,230],[1950,208],[2470,193],[3845,171],[4685,150]], -v); return `rgb(255,${c},${c})`;
};
(function footprint() {
  const row = i => Math.round(41 + 16.93 * i), col = k => 14 + 51 * k;
  let s = '<rect width="3000" height="2000" fill="#d3d3d3"/><g transform="translate(-8 -34)">';
  s += '<g stroke="#a4a4a4" stroke-dasharray="1 1" shape-rendering="crispEdges">';
  for (let i = 0; i < 44; i++) s += line(8, row(i) + .5, 1216, row(i) + .5);
  for (let k = 0; k < 21; k++) s += line(col(k) + .5, 35, col(k) + .5, 806);
  s += '</g>' + line(1085, 792.5, 1216, 792.5, 'stroke="#a0a0a0"');
  [1900,-3000,700,800,500,-700,2100,2100,-2900,-20].forEach((v, i) => s += rect(8, row(16 + i) + .5, 6, 17, `fill="${tone(v)}" stroke="${v === -2900 ? '#000' : '#888'}"`));
  let marks = '';
  cols.forEach(([start, c, a, b, list], k) => {
    const x = col(k) + 7.5, cells = list.split(' ');
    if (c) s += rect(col(k) + 1, row(a) + 1, 6, row(b) - row(a), `fill="${c === 'g' ? '#008000' : '#f00'}" shape-rendering="crispEdges"`);
    cells.forEach((t, j) => {
      const v = parseInt(t), y = row(start + j) + .5, h = row(start + j + 1) - row(start + j);
      s += rect(x, y, 44, h, `fill="${tone(v)}" stroke="#a8a8a8" shape-rendering="crispEdges"`);
      s += text(x + 22, y + 12, v, 'text-anchor="middle"');
      if (t.endsWith('*')) marks += rect(x + .5, y + .5, 43, h - 1, 'fill="none" stroke="#000" stroke-width="2" shape-rendering="crispEdges"');
    });
    s += rect(x, row(start) + .5, 44, row(start + cells.length) - row(start), `fill="none" stroke="${k === 12 ? '#000' : '#707070'}" shape-rendering="crispEdges"`);
  });
  s += marks;
  s += rect(8, 781, 6, 11, 'fill="#c0f5c0"') + rect(8, 793, 6, 11, 'fill="#f0fff0"');
  vols.forEach((v, k) => {
    const c = lerp([[0,255],[2000,240],[7500,212],[14000,184],[19439,156]], v), x = col(k) + 1;
    s += rect(x, 781, 50, 11, `fill="rgb(${c},${v > 9000 ? 244 : 253},${c})"`) + rect(x, 793, 50, 11, `fill="${v < 1250 ? '#fff' : '#f0fff0'}"`);
    s += text(x + 25, 791, v, 'text-anchor="middle"') + text(x + 25, 803, pcts[k] + '%', 'text-anchor="middle"');
  });
  s += '<g stroke="#6495ed" stroke-width="2" shape-rendering="crispEdges">' + line(13, 315, 1216, 315) + line(13, 434, 1216, 434) + '</g>';
  s += '<g fill="#d3d3d3" stroke="#fff" stroke-width="2"><circle cx="612" cy="434" r="4"/><path d="M8 430a4 4 0 010 8M1216 430a4 4 0 000 8"/></g>';
  s += '<g fill="none" stroke="#fff" shape-rendering="crispEdges"><path d="M1218.500 35V807.500H8"/>' + line(1219, 49.5, 1224, 49.5);
  for (let i = 0; i < 16; i++) { const y = Math.round(95 + i * 45.14) + .5; s += line(1219, y, 1224, y); }
  for (let i = 0; i < 13; i++) { const x = Math.round(116 + i * 76.5) + .5; s += line(x, 808, x, 813); }
  s += '</g><g class="font-[\'Liberation_Sans\',sans-serif] text-[11px]" fill="#333">';
  for (let i = 0; i < 16; i++) s += text(1226, Math.round(99 + i * 45.14), (3124 - 2 * i) + ',00');
  for (let i = 0; i < 13; i++) { const m = 1140 + i * 15; s += text(Math.round(117 + i * 76.5), 829, Math.floor(m / 60) + ':' + String(m % 60).padStart(2, '0'), 'text-anchor="middle"'); }
  s += text(13, 49, 'MarketBalance') + text(13, 798, '© 2020 NinjaTrader, LLC');
  s += '<path d="M1213 478l5-8h53v17h-53z" fill="#000"/>' + text(1226, 483, '3107,00', 'fill="#fff"') + '</g></g>';
  $('fp').innerHTML = s;
  $('fp').classList.add("font-['Noto_Sans',sans-serif]", 'text-[10px]');
})();

/* 15-second chart. Each candle: high,top,bottom,low in quarter-point ticks below 3114, plus colour */
const sec = `7,8,10,10r 9,9,9,10 8,9,9,10 5,5,10,10g 1,2,4,5g 1,1,5,5r 3,5,5,6 3,3,5,6g 2,3,3,5 2,3,4,5r 3,4,4,6 3,3,4,6r 4,5,8,8r 4,7,7,8 6,6,7,7g 7,7,10,10r 9,10,10,11 10,10,12,13r 10,11,12,12r 11,11,12,13r 11,12,13,13r 12,13,13,15 13,13,16,16r 15,15,15,17 15,16,18,18r 16,16,18,18g 14,15,16,17g 13,14,14,15 12,13,14,15r 12,14,14,15 14,14,15,15g 14,15,15,15 14,14,15,16g 12,14,14,15 14,14,16,16r 15,16,16,17 15,15,15,16 15,15,17,17r 16,17,18,19r 16,16,17,17g 15,15,16,17g 8,9,15,15g 8,8,9,10r 9,10,10,11 9,10,11,11g 10,10,10,11 11,11,13,13r 10,10,12,12g 9,10,10,11 9,9,9,10 6,6,8,8g 5,5,6,6g 3,5,5,5 3,5,5,5 4,4,4,6 4,4,6,6r 5,6,7,8r 7,8,8,9 6,7,7,7 6,6,7,8r 7,7,8,8r 9,9,10,11r 9,9,11,11r 10,11,11,13 9,10,11,11g 5,7,9,9g 5,6,6,7 5,6,8,8r 6,6,7,7g 6,6,6,7 6,7,9,10r 9,9,11,12r 8,9,12,12g 7,8,10,10r 10,10,11,12r 11,11,11,12 11,11,11,12 11,12,12,13 10,12,12,12 11,12,12,12 11,12,12,13 8,8,12,12g 7,7,8,9g 6,7,8,8r 7,8,10,11r 9,9,10,12r 10,10,11,11g 9,9,10,10g 10,10,10,11 8,10,11,11r 9,10,11,11g 10,10,11,11r 10,10,10,11 10,10,10,12 10,10,13,14r 11,12,15,15r 13,13,15,15g 12,12,13,14g 10,10,11,12g 11,11,13,13r 11,11,13,13g 9,10,11,11g 10,10,13,13r 12,13,13,14 12,12,13,14g 8,9,12,13g 9,10,10,11 8,9,10,11g 7,8,9,9g 6,6,8,8g 5,7,7,8 7,7,9,9r 8,8,8,9 3,6,7,7g 6,6,11,11r 11,12,13,15r 12,14,16,16r 14,15,17,17r 14,17,19,19r 19,19,23,23r 24,24,26,31r 20,21,25,26g 21,21,23,23r 22,23,25,26r 24,25,26,27r 24,24,26,28g 24,24,26,27r 25,26,26,27 27,27,29,29r 27,28,29,29g 27,28,35,35r 29,30,35,36g 28,29,29,30 28,29,30,30g 28,28,30,31r 27,28,29,30g 27,28,29,30g 26,27,28,28g 24,26,26,27 25,26,28,28r 28,28,29,30g 26,27,27,28 25,27,27,28 26,26,27,28g 25,25,26,26g 26,26,27,28r 27,27,27,28 26,27,27,27 27,27,28,29r 28,28,30,30r 28,28,30,30g 26,26,28,28g 25,26,27,27r 25,28,28,28 28,29,32,32r 30,31,33,35r 33,34,34,35 32,32,34,34g 32,32,35,35r 34,35,35,38 34,35,35,37 33,33,36,36g 32,33,34,35g 31,31,34,34g 31,32,32,33 31,31,32,33r 30,31,32,32g 32,32,33,33r 32,32,33,35g 33,33,35,35r 33,33,35,35g 32,33,34,34g 32,33,33,34 33,33,36,36r 36,36,39,41r 36,38,40,40g 34,34,38,38g 31,31,34,35g 30,31,33,33r 30,30,32,33g 28,28,30,31g 28,28,29,30r 29,29,29,30 28,28,30,30g 27,28,28,29 27,27,28,29r 27,28,29,29r 27,27,29,29g 27,27,28,28g 26,27,27,28 25,25,27,27g 24,24,25,26g 23,23,25,25g 23,23,26,26r 25,26,27,27r 24,26,27,27g 26,26,26,28 27,27,28,28r`.split(' ');
(function seconds() {
  const y = t => Math.round(930 + t * 8.977);
  let s = '<rect width="3000" height="2000" fill="#040404"/><g transform="translate(-9 -918)" shape-rendering="crispEdges"><g stroke="#555">';
  for (let t = 0; t <= 42; t += 6) s += line(9, y(t) + .5, 1219, y(t) + .5);
  const vx = i => Math.round(40 + i * 60.16);
  for (let i = 0; i < 20; i++) s += line(vx(i) + .5, 918, vx(i) + .5, 1321);
  s += '</g><g stroke="#fff">';
  sec.forEach((c, n) => {
    const [h, t, b, l] = c.split(',').map(v => parseInt(v)), x = Math.round(22 + n * 6.016) + .5, k = c.slice(-1);
    s += line(x, y(h), x, y(l) + 1);
    s += t === b ? line(x - 2.5, y(t) + .5, x + 2.5, y(t) + .5) : rect(x - 2, y(t) + .5, 4, y(b) - y(t), `fill="${k === 'g' ? '#32cd32' : '#f00'}"`);
  });
  s += '<path d="M1220.500 918V1323.500H9" fill="none"/>';
  for (let i = 0; i < 22; i++) s += line(1221, y(2 * i) + .5, 1225, y(2 * i) + .5);
  for (let i = 0; i < 20; i++) s += line(vx(i) + .5, 1324, vx(i) + .5, 1328);
  s += '<path d="M1214 1182l6-8.500h53v16h-53z" fill="#040404" shape-rendering="auto"/></g><g fill="#eee">';
  for (let i = 0; i < 22; i++) s += text(1228, i === 14 ? 1186 : y(2 * i) + 5, (3114 - i / 2).toFixed(2).replace('.', ','));
  '02 05 07 10 12 15 17 20 22 25 27 30 32 35 37 40 42 45 47 50'.split(' ').forEach((m, i) => s += text(vx(i) + 1, 1345, '21:' + m, 'text-anchor="middle"'));
  s += text(14, 1314, '© 2020 NinjaTrader, LLC') + '</g></g>';
  $('sec').innerHTML = s;
  $('sec').classList.add('text-[11px]');
})();

/* ---------- MetaTrader toolbars ---------- */
const cell = (icon, label, on) => `<button aria-label="${label}" class="flex h-[26px] w-8 items-center justify-center"><span class="flex h-[26px] w-[30px] items-center justify-center ${on ? 'border border-[#90c8f6] bg-[#c0dcf3]' : ''}"><svg class="size-6"><use href="#${icon}"/></svg></span></button>`;
const drop = '<button aria-label="Список" class="flex w-2"><svg class="h-5 w-2"><use href="#m-tiny"/></svg></button>';
const sep = '<span class="flex h-6 w-[7px] justify-center"><span class="w-px bg-[#a0a0a0]"></span></span>';
const grip = '<span class="h-6 w-1.5 shrink-0 px-0.5"><span class="block h-full border-l-2 border-dotted border-[#bbb]"></span></span>';
$('tb1').innerHTML = grip + cell('m-newchart','Новый график') + drop + cell('m-charts','Профили') + drop + cell('m-money','Обзор рынка') + '<span class="w-px"></span>' + sep +
  cell('m-book','Справочник') + cell('m-cloud','Облако') + cell('m-signal','Сигналы') + sep +
  '<button class="flex h-[26px] w-[111px] items-center justify-between border border-[#90c8f6] bg-[#c0dcf3] pr-1 pl-0.5 text-xs"><svg class="size-[22px]"><use href="#m-algo"/></svg>Алготрейдинг</button>' +
  '<button class="ml-1 flex h-[26px] w-[107px] items-center text-xs"><svg class="mr-0.5 size-[22px] shrink-0"><use href="#m-order"/></svg>Новый&nbsp;ордер</button>' + sep +
  cell('m-bars','Бары') + cell('m-candles','Свечи', 1) + cell('m-line','Линия') + sep + cell('m-zin','Увеличить') + cell('m-zout','Уменьшить') + cell('m-tile','Упорядочить') + sep +
  cell('m-scroll','Автопрокрутка', 1) + cell('m-shift','Сдвиг графика', 1) + sep + cell('m-tpl','Шаблоны');
$('tb2').innerHTML = grip + cell('m-cur','Курсор', 1) + cell('m-cross','Перекрестие') + sep + cell('m-v','Вертикальная линия') + cell('m-h','Горизонтальная линия') + cell('m-d','Трендовая линия') + cell('m-chan','Канал') + cell('m-fib','Фибоначчи') + cell('m-text','Текст') + cell('m-rect','Фигуры') + cell('m-obj','Объекты') + drop + '<span class="w-px"></span>';
$('tb3').innerHTML = grip + 'M1 M5 M15 M30 H1 H4 D1 W1 MN'.split(' ').map(t => `<button class="w-8 text-center">${t}</button>`).join('') + '<span class="w-px"></span>';

/* trading panel: stop loss, take profit, trailing */
$('stops').innerHTML = [['Стоплосс','125',1],['Тейкпрофит','50',1],['Трейлинг','50',0]].map(([n, v, on], i) => `
  <div class="flex h-10 border border-black">
    <button class="w-[38px] shrink-0 ${on ? 'bg-[#1eb41e]' : 'bg-[#c8c8c8]'}">Вкл.</button>
    <div class="flex min-w-0 flex-1 flex-col border-x border-black bg-[#c8c8c8]">
      <label for="s${i}" class="flex h-[18px] items-center justify-center">${n}</label>
      <div class="flex min-h-0 flex-1 border-t border-black text-[13px]"><button class="w-[18px] shrink-0">-</button><input id="s${i}" value="${v}" class="w-0 min-w-0 flex-1 border-x border-black bg-[#e6e6e6] text-center"><button class="w-[18px] shrink-0">+</button></div>
    </div>
    <button class="w-[38px] shrink-0 ${on ? 'bg-[#c8c8c8]' : 'bg-[#eb5032]'}">Выкл.</button>
  </div>`).join('');

/* ---------- MetaTrader chart: slot, high, top, bottom, low, colour ---------- */
const mt = [[-1,390,390,408,408,'r'],[0,396,405,408,418,'g'],[11,457,457,460,460,'g'],[12,457,463,494,501,'r'],[13,445,445,494,501,'g'],[14,433,448,448,470],[15,433,439,445,455,'g'],[16,433,433,436,455,'g'],[17,417,436,460,460,'r'],[18,371,396,460,479,'g'],[19,332,368,396,409,'g'],[20,344,368,371,388,'r'],[21,368,368,405,427,'r'],[22,380,399,402,421,'g'],[23,374,399,475,516,'r'],[24,469,475,506,559,'r'],[25,460,475,506,516,'g'],[26,408,433,478,489,'g'],[27,402,423,429,443,'g'],[28,368,393,423,427,'g'],[29,341,377,393,412,'g'],[30,338,347,374,397,'g'],[31,249,276,347,354,'g'],[32,237,261,270,296,'g'],[33,209,212,258,299,'g'],[34,203,212,218,277,'r'],[35,160,188,215,222,'g'],[36,166,185,188,238,'g'],[37,176,188,188,225],[38,172,188,273,277,'r'],[39,267,270,365,391,'r'],[40,316,356,368,397,'g'],[41,316,316,359,378,'g'],[42,301,316,365,371,'r'],[43,322,335,365,378,'g'],[44,313,332,335,357,'g'],[45,328,328,341,391,'r'],[46,313,344,362,369,'r'],[47,359,362,426,458,'r'],[48,411,423,460,464,'r'],[49,429,457,463,467,'r'],[50,414,420,466,479,'g'],[51,414,420,433,440,'r'],[52,426,429,460,464,'r'],[53,393,396,460,460,'g'],[54,328,344,396,409,'g'],[55,322,344,344,354],[56,322,344,356,375,'r'],[57,325,344,359,375,'g'],[58,341,341,344,363,'r'],[59,325,338,402,430,'r'],[60,387,387,402,443,'g'],[61,387,387,402,402,'r']];
const mtVol = [3,3,4,4,7,5,4,5,4,4,3,4,5,6,6,3,3,5,14,14,9,10,6,22,21,11,15,11,11,37,34,41,33,30,24,27,25,18,25,47,37,24,25,16,14,16,14,30,15,15,18,9,10,12,20,10,16,10,7,20,14,2];
const deals = [[54,363,'s'],[54,379,'b'],[55,334,'s'],[55,349,'b'],[56,321,'s'],[56,337,'b'],[57,340,'s'],[57,355,'b'],[58,346,'b'],[58,343,'s'],[58,337,'s'],[59,337,'b'],[59,343,'s'],[59,361,'b'],[59,366,'s'],[59,377,'s'],[59,372,'s'],[59,391,'b'],[59,386,'s'],[59,397,'s'],[59,404,'b'],[59,410,'b'],[59,413,'b'],[59,419,'b'],[60,410,'s'],[60,407,'s'],[60,417,'b'],[60,425,'b'],[60,422,'s'],[60,438,'b']];
(function metatrader() {
  const X = n => 1301 + 16 * n;
  let s = '<g transform="translate(-1283 -145)"><g stroke="#d0d0d0" stroke-dasharray="4 3" shape-rendering="crispEdges">';
  for (let k = 0; k < 38; k++) s += line(1317.5 + 32 * k, 149, 1317.5 + 32 * k, 613);
  for (let i = 0; i < 13; i++) { const y = Math.round(172 + i * 33.67) + .5; s += line(1286, y, 2504, y); }
  s += '</g><path d="M2274 149h8l-4 5z" fill="#ccc"/><g shape-rendering="crispEdges">';
  mtVol.forEach((v, n) => s += rect(X(n), 613 - v, 2, v, 'fill="#008000"'));
  s += line(1286, 402.5, 2504, 402.5, 'stroke="#2f4f4f"') + '<g stroke="#000">';
  mt.forEach(([n, h, t, b, l, c]) => {
    const x = X(n) + .5;
    s += line(x, h, x, l + 1);
    if (t === b) s += line(x - 5.5, t + .5, x + 5.5, t + .5);
    else if (n < 0) s += rect(1286, t + .5, 4.5, b - t, 'fill="#f00"');
    else s += rect(x - 5, t + .5, 10, b - t, `fill="${c === 'g' ? '#008000' : '#f00'}"`);
  });
  s += '<path d="M1285.500 613.500V148.500H2504.500V613.500z" fill="none"/>';
  for (let i = 0; i < 13; i++) { const y = Math.round(172 + i * 33.67) + .5; s += line(2505, y, 2509, y); }
  for (let i = 0; i < 15; i++) s += line(1349.5 + 64 * i, 614, 1349.5 + 64 * i, 618);
  s += '</g></g><g stroke-dasharray="2 1">' + line(1301.5 + 16 * 59, 340, 1301.5 + 16 * 59, 418, 'stroke="#0a5cb0"') + line(1301.5 + 16 * 60, 408, 1301.5 + 16 * 60, 436, 'stroke="#e04820"') + line(1301.5 + 16 * 56, 324, 1301.5 + 16 * 56, 334, 'stroke="#0a5cb0"') + '</g>';
  deals.forEach(([n, y, k]) => s += `<path transform="translate(${X(n) + .5} ${y})" d="${k === 's' ? 'M-4-1h2.500v-2h3v2h2.500l-4 4z' : 'M-4 1h2.500v2h3V1h2.500L0-3z'}" fill="${k === 's' ? '#e04820' : '#0a5cb0'}" stroke="#fff" stroke-width="2" paint-order="stroke"/>`);
  for (let i = 0; i < 13; i++) s += text(2510, Math.round(176 + i * 33.67), (3125.75 - 2.75 * i).toFixed(2));
  s += rect(2507, 397, 39, 11, 'fill="#2f4f4f"') + text(2510, 406, '3107.00', 'fill="#fff"');
  s += text(1285, 626, '4 Jun 2020');
  for (let i = 0; i < 15; i++) { const m = 550 + i * 40; s += text(1349 + 64 * i, 626, `4 Jun ${String(Math.floor(m / 60)).padStart(2, '0')}:${String(m % 60).padStart(2, '0')}`); }
  s += '<g class="text-[10px]">' + text(1326, 162, 'MESM20, M10') + text(2484, 163, 'TradePanelCME.1.0.8+', 'text-anchor="end"') + '</g>';
  s += '<rect x="1289.500" y="152.500" width="14" height="12" fill="#e8ecff" stroke="#5058c0"/><path d="M1289 154h15" stroke="#5058c0" stroke-width="2"/><path d="M1292 157.500h4M1292 160.500h4" stroke="#3060e0" stroke-width="2"/><path d="M1298 157.500h4M1298 160.500h4" stroke="#e04040" stroke-width="2"/>';
  s += '<path d="M1306 153h4v4h3v7h-7z" fill="#2a3ad0"/><path d="M1321 153h-4v4h-3v7h7z" fill="#c83838"/><path d="M1310 154h7" stroke="#999" stroke-width="2"/>';
  s += '<use href="#m-algo" x="2486" y="150" width="16" height="16"/></g>';
  $('mt').innerHTML = s;
  $('mt').classList.add('text-[9px]');
})();

/* ---------- history table ---------- */
const heads = ['Время','Символ','Тикет','Тип','Объем','Цена','S / L','T / P','Время','Цена','Комиссия','Прибыль','Изменение'];
$('heads').innerHTML = heads.map((h, i) => `<th class="border-r border-[#e0e0e0] font-normal ${i ? 'pr-1.5 text-right' : 'pl-1.5 text-left'}">${i === 1 ? '<span class="inline-flex items-center gap-3">Символ<svg width="8" height="5"><path d="M0 5h8L4 0z" fill="#444"/></svg></span>' : h}</th>`).join('');
const hist = `17:41 57808401 b 3109.25 3108.00 17:42:10 3109.75 7.50 0.02
17:51 57810865 b 3111.75 3110.50 17:52:27 3112.25 7.50 0.02
18:02 57813285 b 3112.75 3111.75 18:02:52 3113.25 7.50 0.02
18:12 57815780 b 3111.25 3110.00 18:12:12 3111.75 7.50 0.02
18:22 57818466 b 3112.00 3110.75 18:22:26 3112.00 0.00 0.00
18:22 57818607 b 3112.00 3111.00 18:22:51 3111.50 -7.50 -0.02
18:30 57820245 b 3112.75 3111.50 18:30:25 3111.50 -18.75 -0.04
18:30 57820429 b 3110.75 3109.50 18:31:27 3109.50 -18.75 -0.04
18:31 57820695 s 3108.75 3110.00 18:31:44 3108.25 7.50 0.02
18:31 57820821 s 3107.25 3108.50 18:31:54 3106.75 7.50 0.02
18:32 57820993 b 3108.50 3107.50 18:32:14 3109.00 7.50 0.02
18:32 57821124 s 3108.00 3109.25 18:32:43 3107.50 7.50 0.02
18:34 57821511 s 3106.50 3107.75 18:34:25 3106.00 7.50 0.02
18:35 57821957 s 3107.00 3108.00 18:35:24 3106.50 7.50 0.02
18:36 57822289 s 3107.00 3108.25 18:36:46 3106.50 7.50 0.02
18:37 57822446 s 3107.00 3108.25 18:38:35 3107.25 -3.75 -0.01
18:38 57822669 s 3107.00 3108.25 18:39:14 3106.50 7.50 0.02
18:40 57822967 s 3106.00 3107.25 18:40:42 3105.50 7.50 0.02
18:40 57823064 b 3105.50 3104.50 18:41:04 3106.00 7.50 0.02
18:41 57823298 s 3105.00 3106.25 18:41:52 3104.50 7.50 0.02
18:42 57823562 b 3106.25 3105.00 18:43:21 3106.25 0.00 0.00`.split('\n').map(r => r.split(' '));
$('rows').innerHTML = hist.map((r, i) => {
  const c = r[7] > 0 ? 'text-[#0000ff]' : r[7] < 0 ? 'text-[#ff0000]' : '';
  const td = (v, k = '') => `<td class="border-r border-b border-[#c0c0c0] pr-[3px] ${k}">${v}</td>`;
  return `<tr class="h-5 ${i % 2 ? 'bg-[#eaeaea]' : ''}"><td class="border-r border-b border-[#c0c0c0]"><div class="flex h-[18px] items-center gap-[7px] overflow-hidden pl-0.5 whitespace-nowrap"><svg class="h-[17px] w-3 shrink-0"><use href="#m-doc${r[2]}"/></svg>2020.06.04 ${r[0]}:...</div></td>` +
    td('mesm20') + td(r[1]) + td(r[2] === 'b' ? 'buy' : 'sell') + td(3) + td(r[3]) + td(r[4], i === 6 || i === 7 ? 'bg-[#ffa0a0]' : '') + td('') + td('2020.06.04 ' + r[5]) + td(r[6]) + td('-2.22') + td(r[7], c) + td(r[8] + ' %', c) + '</tr>';
}).join('');

/* toolbox tabs */
const tabs = [['Торговля','w-[73px]'],['Активы','w-[61px]'],['История','w-[67px]'],['Новости','w-[67px]'],['Почта','w-[61px]','7'],['Календарь','w-[77px]'],['Компания','w-[77px]'],['Маркет','w-[61px]'],['Алерты','w-[62px]'],['Сигналы','w-[69px]'],['Статьи','w-[63px]','1'],['Библиотека','w-[86px]'],['VPS','w-[40px]'],['Эксперты','w-[73px]'],['Журнал','w-[66px]']];
$('tabs').innerHTML = tabs.map(([t, w, n], i) => i === 2
  ? `<a href="#" class="-mt-px flex h-[21px] ${w} items-center justify-center border border-t-0 border-black bg-white text-black">${t}</a>`
  : `<a href="#" class="flex h-[17px] ${w} items-center justify-center whitespace-nowrap"><span class="flex h-[13px] w-full items-center justify-center ${i === 1 || i === 14 ? '' : 'border-r border-[#999]'}">${t}${n ? `<small class="pt-2 text-[8px] text-[#ff0000]">${n}</small>` : ''}</span></a>`).join('') + '<a href="#" class="mr-[18px] ml-auto flex h-[19px] items-center text-black">Тестер стратегий</a>';
</script>
</body>
</html>
